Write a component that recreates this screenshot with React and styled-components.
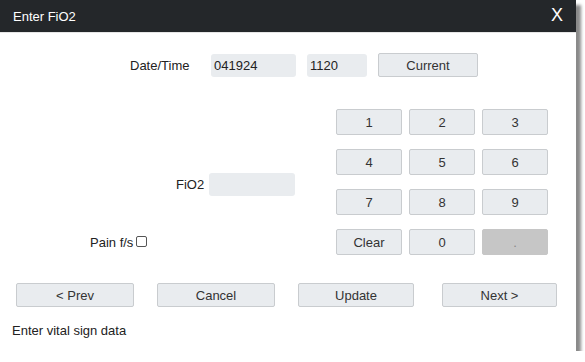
import React from "react";
import styled, { createGlobalStyle } from "styled-components";

const Global = createGlobalStyle`
  html, body {
    margin: 0;
    padding: 0;
    background: #fff;
  }
  body {
    font-family: "Liberation Sans", Arial, sans-serif;
    font-size: 13px;
    color: #222;
  }
`;

const Dialog = styled.div`
  width: 576px;
  height: 351px;
  background: #fff;
  box-shadow: 5px 5px 3px #8a8a8a;
  display: flex;
  flex-direction: column;
`;

const Header = styled.div`
  height: 32px;
  background: #24272a;
  color: #fff;
  display: flex;
  align-items: center;
  justify-content: space-between;
  padding: 0 13px 0 13px;
  border-bottom: 1px solid #e6e6e6;
  .title {
    font-size: 13px;
  }
  .close {
    font-size: 18px;
    margin-top: -2px;
  }
`;

const Body = styled.div`
  flex: 1;
  padding-top: 20px;
  display: flex;
  flex-direction: column;
`;

const DateRow = styled.div`
  display: flex;
  align-items: center;
  height: 24px;
  padding-left: 130px;
`;

const Label = styled.span`
  color: #222;
  font-size: 13px;
  width: ${(p) => p.$width || "auto"};
`;

const Field = styled.div`
  background: #e9ecef;
  border-radius: 3px;
  width: ${(p) => p.$width}px;
  height: 23px;
  margin-left: ${(p) => p.$gap || 0}px;
  display: flex;
  align-items: center;
  padding-left: 3px;
  box-sizing: border-box;
  font-size: 13px;
  color: #222;
`;

const Button = styled.div`
  box-sizing: border-box;
  width: ${(p) => p.$width}px;
  height: ${(p) => p.$height || 24}px;
  margin-left: ${(p) => p.$gap || 0}px;
  background: ${(p) => (p.$disabled ? "#c6c6c6" : "#e9ecef")};
  border: 1px solid ${(p) => (p.$disabled ? "#c6c6c6" : "#c9cccf")};
  border-radius: 2px;
  display: flex;
  align-items: center;
  justify-content: center;
  color: ${(p) => (p.$disabled ? "#888" : "#333")};
  font-size: 13px;
`;

const Middle = styled.div`
  display: flex;
  margin-top: 32px;
`;

const LeftCol = styled.div`
  width: 336px;
  display: flex;
  flex-direction: column;
`;

const FioRow = styled.div`
  display: flex;
  align-items: center;
  padding-left: 176px;
  margin-top: 64px;
`;

const PainRow = styled.div`
  display: flex;
  align-items: center;
  padding-left: 90px;
  margin-top: 39px;
`;

const Check = styled.span`
  display: inline-block;
  width: 9px;
  height: 9px;
  border: 1px solid #555;
  border-radius: 2px;
  margin-left: 3px;
  margin-top: -2px;
`;

const Keypad = styled.div`
  display: grid;
  grid-template-columns: repeat(3, 66px);
  grid-auto-rows: 26px;
  column-gap: 7px;
  row-gap: 14px;
`;

const Actions = styled.div`
  display: flex;
  padding-left: 16px;
  margin-top: 28px;
`;

const Status = styled.div`
  padding-left: 12px;
  margin-top: 16px;
  font-size: 13px;
  color: #222;
`;

const keys = ["1", "2", "3", "4", "5", "6", "7", "8", "9", "Clear", "0", "."];

export default function App() {
  return (
    <>
      <Global />
      <Dialog>
        <Header>
          <span className="title">Enter FiO2</span>
          <span className="close">X</span>
        </Header>
        <Body>
          <DateRow>
            <Label $width="81px">Date/Time</Label>
            <Field $width={85}>041924</Field>
            <Field $width={60} $gap={11}>1120</Field>
            <Button $width={100} $gap={11}>Current</Button>
          </DateRow>
          <Middle>
            <LeftCol>
              <FioRow>
                <Label>FiO2</Label>
                <Field $width={86} $gap={5} />
              </FioRow>
              <PainRow>
                <Label>Pain f/s</Label>
                <Check />
              </PainRow>
            </LeftCol>
            <Keypad>
              {keys.map((k) => (
                <Button key={k} $width={66} $height={26} $disabled={k === "."}>
                  {k}
                </Button>
              ))}
            </Keypad>
          </Middle>
          <Actions>
            <Button $width={118}>&lt; Prev</Button>
            <Button $width={118} $gap={23}>Cancel</Button>
            <Button $width={116} $gap={23}>Update</Button>
            <Button $width={115} $gap={28}>Next &gt;</Button>
          </Actions>
          <Status>Enter vital sign data</Status>
        </Body>
      </Dialog>
    </>
  );
}
